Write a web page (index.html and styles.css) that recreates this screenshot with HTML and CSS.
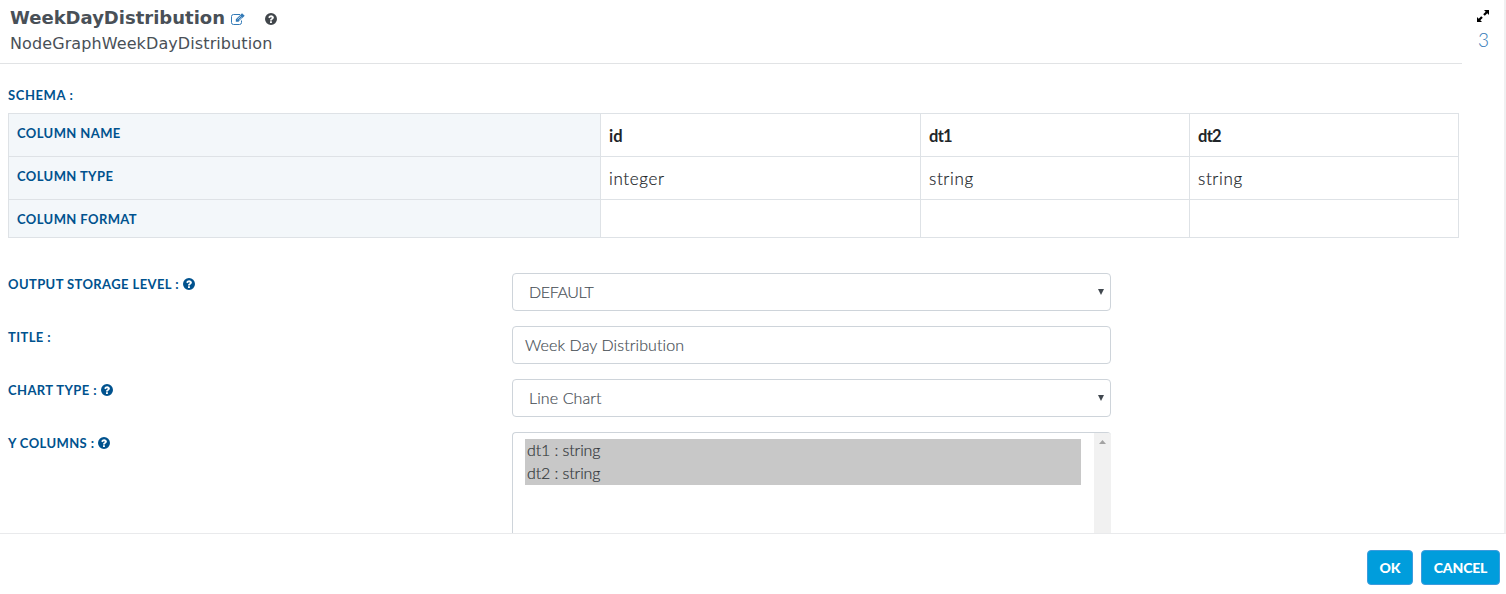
FILE: index.html
```html
<!DOCTYPE html>
<html lang="en">
<head>
<meta charset="utf-8">
<title>WeekDayDistribution</title>
<link rel="stylesheet" href="styles.css">
</head>
<body>
<svg class="defs" aria-hidden="true">
  <symbol id="help" viewBox="0 0 12 12"><path fill-rule="evenodd" d="M6 0a6 6 0 1 1 0 12A6 6 0 0 1 6 0ZM5 8.3v1.6h1.9V8.3ZM3.2 4.3l1.300 1C5 4.600 5.400 4.200 6 4.200c.5 0 .9.2.9.6 0 .9-1.900.9-1.900 2.500v.3h1.900c0-1.100 2-1.300 2-3C8.900 3.100 7.600 2.200 6.100 2.200 4.800 2.200 3.900 2.900 3.200 4.300Z"/></symbol>
</svg>
<main class="panel">
  <header class="head">
    <div class="titles">
      <div class="title-row">
        <h1 class="title">WeekDayDistribution</h1>
        <svg class="edit" viewBox="0 0 14 12"><path d="M10.500 7.500v2a2 2 0 0 1-2 2h-6a2 2 0 0 1-2-2v-6a2 2 0 0 1 2-2h6.500" fill="none" stroke="#337ab7"/><path d="M4.800 8.800V6.200L11 .2l2.700 2.600-6.200 6Z" fill="#337ab7"/><path d="M6.500 6.300l3.300-3.200M7.900 7.500l3.200-3.100" stroke="#fff" stroke-width=".7" fill="none"/></svg>
        <svg class="help help-dark"><use href="#help"/></svg>
      </div>
      <div class="subtitle">NodeGraphWeekDayDistribution</div>
    </div>
    <div class="tools">
      <svg class="expand" viewBox="0 0 12 12"><path d="M7 0h5v5l-1.700-1.700-2.500 2.500-1.600-1.600 2.500-2.500ZM5 12H0V7l1.700 1.700 2.500-2.500 1.600 1.600-2.500 2.500Z"/></svg>
      <span class="count">3</span>
    </div>
  </header>
  <section class="content">
    <div class="label schema-label"><span>SCHEMA :</span></div>
    <table class="schema">
      <tr><th class="label">COLUMN NAME</th><td class="name id">id</td><td class="name dt">dt1</td><td class="name dt">dt2</td></tr>
      <tr><th class="label">COLUMN TYPE</th><td>integer</td><td>string</td><td>string</td></tr>
      <tr class="last"><th class="label">COLUMN FORMAT</th><td></td><td></td><td></td></tr>
    </table>
    <div class="form">
      <div class="row"><div class="label"><span>OUTPUT STORAGE LEVEL :</span><svg class="help"><use href="#help"/></svg></div><div class="field select"><span class="upper">DEFAULT</span><i class="caret"></i></div></div>
      <div class="row"><div class="label"><span>TITLE :</span></div><div class="field"><span>Week Day Distribution</span></div></div>
      <div class="row"><div class="label"><span>CHART TYPE :</span><svg class="help"><use href="#help"/></svg></div><div class="field select"><span>Line Chart</span><i class="caret"></i></div></div>
      <div class="row"><div class="label"><span>Y COLUMNS :</span><svg class="help"><use href="#help"/></svg></div>
        <div class="list"><div class="options"><div class="option">dt1 : string</div><div class="option">dt2 : string</div></div><div class="scroll"><i class="up"></i></div></div>
      </div>
    </div>
  </section>
</main>
<footer class="foot"><button class="btn ok">OK</button><button class="btn cancel">CANCEL</button></footer>
</body>
</html>
```
FILE: styles.css
```css
* { box-sizing: border-box; }
body { margin: 0; height: 594px; overflow: hidden; background: #fff; color: #212529; font-family: Lato, sans-serif; font-variant-ligatures: none; }
svg { display: block; flex: none; }
.defs { position: absolute; width: 0; height: 0; }
.panel { height: 534px; overflow: hidden; border-right: 2px solid #f0f0f1; border-bottom: 1px solid #e9eaec; }
.head { display: flex; height: 64px; }
.titles { width: 1462px; padding: 7px 0 0 10px; border-bottom: 1px solid #e1e3e5; font-family: Verdana, "DejaVu Sans", sans-serif; color: #495057; }
.title-row { display: flex; align-items: flex-start; height: 24px; }
.title { width: 215px; margin: 0; font-size: 18px; line-height: 21px; font-weight: 700; white-space: nowrap; }
.edit { width: 14px; height: 12px; margin: 6px 0 0 6px; }
.help { width: 12px; height: 12px; fill: #00528e; }
.help-dark { margin: 6px 0 0 20px; fill: #41464b; }
.subtitle { padding-top: 1px; font-size: 16px; line-height: 24px; letter-spacing: .1px; }
.tools { display: flex; flex-direction: column; padding: 10px 0 0 15px; }
.expand { width: 12px; height: 12px; }
.count { margin: 6px 0 0 1px; color: #337ab7; font-size: 19px; line-height: 24px; font-weight: 300; }
.content { padding-left: 8px; }
.label { color: #00528e; font-size: 13px; font-weight: 700; line-height: 20px; letter-spacing: .4px; white-space: nowrap; }
.schema-label { height: 49px; padding-top: 21px; letter-spacing: .6px; }
.schema { width: 1451px; table-layout: fixed; border-collapse: collapse; }
.schema th, .schema td { height: 43px; padding: 9px 8px 0; border: 1px solid #dee2e6; text-align: left; vertical-align: top; }
.schema th { width: 592px; background: #f3f7fa; }
.schema .id { width: 320px; }
.schema .dt { width: 269px; }
.schema td { padding-top: 10px; font-size: 17px; line-height: 24px; font-weight: 300; letter-spacing: .65px; -webkit-text-stroke: .2px; }
.schema td.name { font-weight: 700; font-size: 16.5px; letter-spacing: 0; -webkit-text-stroke: 0; }
.schema td.name.dt { letter-spacing: -.7px; }
.schema .last th, .schema .last td { height: 38px; }
.form { display: grid; gap: 15px; padding-top: 35px; }
.row { display: grid; grid-template-columns: 504px 599px; align-items: start; }
.row .label { display: flex; align-items: center; gap: 4px; padding-top: 1px; }
.field { display: flex; align-items: center; height: 38px; padding: 0 12px 2px; border: 1px solid #ced4da; border-radius: 4px; color: #495057; font-size: 16px; font-weight: 300; letter-spacing: .1px; -webkit-text-stroke: .2px; }
.select { justify-content: space-between; padding: 0 6px 2px 16px; }
.upper { letter-spacing: -.4px; }
.caret { width: 6px; height: 6px; margin-top: 2px; background: #41484f; clip-path: polygon(0 0, 100% 0, 50% 100%); }
.list { display: flex; height: 150px; border: 1px solid #ced4da; border-right: 0; border-radius: 4px; overflow: hidden; }
.options { width: 556px; margin: 6px 13px 0 12px; color: #34383c; font-size: 16px; font-weight: 300; letter-spacing: -.1px; -webkit-text-stroke: .2px; }
.option { height: 23px; padding-left: 2px; background: #c8c8c8; line-height: 21px; }
.scroll { width: 17px; padding: 7px 0 0 5px; background: #f1f1f1; }
.up { display: block; width: 7px; height: 4px; background: #a3a3a3; clip-path: polygon(50% 0, 100% 100%, 0 100%); }
.foot { display: flex; justify-content: flex-end; gap: 8px; padding: 16px 6px 0 0; }
.btn { height: 35px; padding: 0; border: 1px solid #3d9bdd; border-radius: 4px; background: #009ddc; color: #fff; font: 900 14px/20px Lato, sans-serif; letter-spacing: -.15px; }
.ok { width: 46px; }
.cancel { width: 79px; }
```
